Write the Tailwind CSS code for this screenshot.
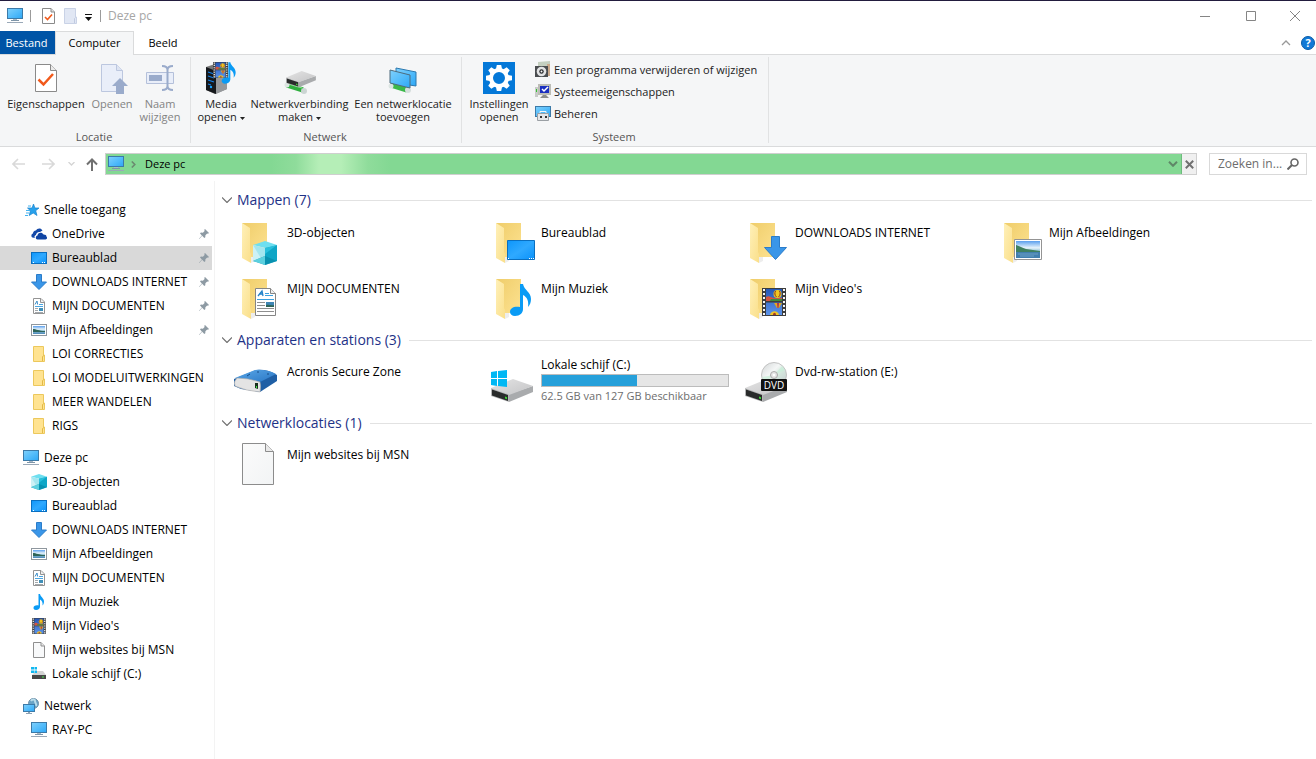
<!DOCTYPE html>
<html lang="nl">
<head>
<meta charset="utf-8">
<title>Deze pc</title>
<script src="https://cdn.jsdelivr.net/npm/@tailwindcss/browser@4"></script>
</head>
<body class="flex min-h-screen flex-col bg-white font-['Open_Sans','Noto_Sans',sans-serif] text-xs text-black">

<svg class="absolute size-0" aria-hidden="true">
  <defs>
    <linearGradient id="gScreen" x1="0" y1="0" x2="1" y2="1"><stop offset="0" stop-color="#7fd0fb"/><stop offset=".5" stop-color="#55bdfb"/><stop offset="1" stop-color="#2ea7f5"/></linearGradient>
    <linearGradient id="gDesk" x1="0" y1="0" x2="1" y2="1"><stop offset="0" stop-color="#0d96fb"/><stop offset=".5" stop-color="#2fa9ff"/><stop offset="1" stop-color="#0a92fa"/></linearGradient>
    <linearGradient id="gFlap" x1="0" y1="0" x2="1" y2="1"><stop offset="0" stop-color="#fff0b8"/><stop offset="1" stop-color="#fadf8a"/></linearGradient>
    <linearGradient id="gBack" x1="0" y1="0" x2="1" y2="1"><stop offset="0" stop-color="#efcd6a"/><stop offset="1" stop-color="#fde291"/></linearGradient>
    <linearGradient id="gDrive" x1="0" y1="0" x2="1" y2="1"><stop offset="0" stop-color="#e4e4e4"/><stop offset="1" stop-color="#c4c4c6"/></linearGradient>
    <linearGradient id="gBlue" x1="0" y1="0" x2="1" y2="1"><stop offset="0" stop-color="#5aa6e6"/><stop offset="1" stop-color="#2a78c6"/></linearGradient>
    <linearGradient id="gSky" x1="0" y1="0" x2="0" y2="1"><stop offset="0" stop-color="#5a9fee"/><stop offset=".4" stop-color="#e6f3fb"/><stop offset=".6" stop-color="#8fc0d4"/><stop offset="1" stop-color="#4a87b8"/></linearGradient>
    <linearGradient id="gFilm" x1="0" y1="0" x2="0" y2="1"><stop offset="0" stop-color="#2457b8"/><stop offset="1" stop-color="#5c93e8"/></linearGradient>
    <linearGradient id="gDisc" x1="0" y1="0" x2="1" y2="1"><stop offset="0" stop-color="#d2d6d6"/><stop offset=".4" stop-color="#f4f6f6"/><stop offset=".6" stop-color="#d4e6dd"/><stop offset="1" stop-color="#c4c8cc"/></linearGradient>
    <linearGradient id="gPage" x1="0" y1="0" x2="1" y2="1"><stop offset="0" stop-color="#fbfbfb"/><stop offset="1" stop-color="#f2f4f5"/></linearGradient>

    <symbol id="pc" viewBox="0 0 16 16"><rect x=".5" y=".5" width="15" height="10" fill="url(#gScreen)" stroke="#3c7aa8"/><path d="M6 11h4v1H6z" fill="#a9b9c6"/><path d="M4 12h8v1H4z" fill="#7e95a8"/><path d="M0 14h16v1H0z" fill="#9aa9b8"/></symbol>
    <symbol id="desktop" viewBox="0 0 16 16"><rect x=".5" y="2.500" width="15" height="11" fill="url(#gDesk)" stroke="#0a6fc0"/><path d="M2 12h1v1H2zM11 12h1v1h-1zM13 12h1v1h-1z" fill="#fff"/></symbol>
    <symbol id="down" viewBox="0 0 16 16"><path d="M5.500.5h5V8h5L8 15.500.5 8h5z" fill="#3a96e8" stroke="#2b7cc9"/></symbol>
    <symbol id="docs" viewBox="0 0 16 16"><path d="M2.500.5H10L13.500 4v11.500h-11z" fill="#fff" stroke="#949494"/><path d="M9.500 1v3.500H13" fill="#eee" stroke="#949494"/><path d="m4 6.500 2-3.500.6 3.500" fill="none" stroke="#3a8ecb"/><path d="M8 6.500h4M4 8.500h8" stroke="#4aa6e2"/><path d="M4 10.500h3M4 12.500h3M4 14.500h8" stroke="#a3a8ac"/><path d="M8 10h4v3H8z" fill="#3f8fb8"/></symbol>
    <symbol id="picture" viewBox="0 0 16 16"><rect x=".5" y="2.500" width="15" height="11" fill="#fff" stroke="#8f979e"/><path d="M2 4h12v8H2z" fill="url(#gSky)"/><path d="M2 7c3 0 6 2 12 2v1H2z" fill="#2f6559"/></symbol>
    <symbol id="folder" viewBox="0 0 16 16"><path d="M2.500.5h10V9h1v6.500h-11z" fill="#ffe391" stroke="#ecc85c"/><path d="M11.500 15V10.500l1.500-1" fill="none" stroke="#e2b945"/></symbol>
    <symbol id="cube" viewBox="0 0 24 24"><path d="M12 0 24 4 12 7 0 4z" fill="#6edff0"/><path d="m0 4 12 3v17L0 20z" fill="#cdf1f5"/><path d="m0 4 12 3v17z" fill="#a4e6ef"/><path d="m24 4-12 3v17l12-4z" fill="#0fa6c6"/><path d="m24 4-12 3v6z" fill="#27bfdc"/><path d="m12 15 12 5-12 4-12-4z" fill="#078aa8" opacity=".75"/><path d="m12 15-12 5 12 4z" fill="#5cd0df"/></symbol>
    <symbol id="note" viewBox="0 0 24 32"><path d="M11 0h3c1 6 8 8 8 15 0 3-1 6-3 8 1-6-1-10-5-12v14c0 4-3 7-8 7-3 0-5-2-5-4 0-4 4-6 10-5z" fill="#0a9bf5"/></symbol>
    <symbol id="film" viewBox="0 0 24 28"><path d="M0 0h24v28H0z" fill="#3d3d3d"/><path d="M4 1h16v12H4zM4 14.500h16V27H4z" fill="url(#gFilm)"/><path d="M4 9c3-2 4 0 8 1s5-1 8 0v3H4z" fill="#d4543e"/><path d="M9 11h11v2H8z" fill="#3d8c3a"/><circle cx="15.500" cy="6" r="4" fill="#f0c81f"/><path d="M13.500 3c-1 2-1 4 1 6M17.500 3c1 2 1 4-1 6" stroke="#8b2f22" fill="none"/><path d="M12 15h8l-3 5h-2z" fill="#e2a81f"/><path d="M15 15h2l-.5 5h-1z" fill="#a82f52"/><path d="M8 27c1-5 8-5 9 0z" fill="#f0c424"/><path d="M11 27c0-3 3-3 3 0z" fill="#a2362a"/><path d="M2 1v27M22 1v27" stroke="#f6f6f6" stroke-width="2" stroke-dasharray="2 2"/></symbol>
    <symbol id="page" viewBox="0 0 16 16"><path d="M2.500.5H10L13.500 4v11.500h-11z" fill="#f8f9fa" stroke="#8f8f8f"/><path d="M10 .5V4h3.500" fill="#e8e8e8" stroke="#8f8f8f"/></symbol>
    <symbol id="cdrive" viewBox="0 0 16 16"><path d="m5 5h7l3 4H1z" fill="#d3d3d3"/><path d="M0 1h3v2.500H0zM3.500 1H6v2.500H3.500zM0 4.500h3V7H0zM3.500 4.500H6V7H3.500z" fill="#12b8f0"/><path d="M1 9h14v4H1z" fill="#474747"/><path d="M11 10.500h2v1h-2z" fill="#4be14b"/></symbol>
    <symbol id="network" viewBox="0 0 16 16"><circle cx="10.500" cy="5.500" r="5" fill="#6aa3c6" stroke="#6f8fa6"/><path d="M8 3c1-2 4-2 4 0s2 3 1 5" stroke="#b9dcea" stroke-width="2" fill="none"/><rect x=".5" y="6.500" width="11" height="7" fill="url(#gScreen)" stroke="#3c7aa8"/><path d="M5 14h2v1h2v1H3v-1h2z" fill="#8ea2b4"/></symbol>
    <symbol id="star" viewBox="0 0 16 16"><path d="m9.500 2 1.400 4H15l-3.300 2.700L13 13.500 9.200 11 5.200 13.500l1.200-4.800L3.500 6H8z" fill="#27a1ec" stroke="#1783cf" stroke-width=".7"/><path d="M4 4h3M2 8.500h4M2 11h3M1 13.500h3" stroke="#45b2ee"/></symbol>
    <symbol id="onedrive" viewBox="0 0 16 16"><path d="M1.500 11.500C0 11 0 8 2 7.500 2 5 4.500 4.500 5 4.500 6 2 10 1.500 11.500 4.500L9 6C7 5.500 5 7 5 9c-1.500.5-2 2-1 3z" fill="#1449a8"/><path d="M6.500 13.500C4 13 4.500 10 6.500 9.500 6.500 6.500 11 5.500 12.500 8.500 15 8.500 15.500 9.500 15.300 10.500 16.500 11 16.300 13.500 14.500 13.500z" fill="#0f44a4"/></symbol>
    <symbol id="pin" viewBox="0 0 10 10"><path d="m6 0 4 4-1 .8-.8-.3L6.400 6.300 6.300 8.200 5.300 9 3.200 6.800.3 10l-.3-.3L2.900 6.500 1 4.500l.9-.9 2 .1 1.700-1.800L5.300.8z" fill="#8d9aa3"/></symbol>
    <symbol id="folderLarge" viewBox="0 0 48 48"><path d="m17 44 4-2V38h-4z" fill="#ededed"/><path d="M8 4h25v34H16z" fill="url(#gBack)"/><path d="m8 4 8 5v24l1 2v9l-9-5z" fill="url(#gFlap)"/></symbol>
    <symbol id="check" viewBox="0 0 22 28"><path d="M.5.5h15l6 6v21H.5z" fill="#fff" stroke="#8a8a8a"/><path d="M15.500.5v6h6" fill="#ebebeb" stroke="#8a8a8a"/><path d="m3.500 15.500 5 5L18 10" fill="none" stroke="#f1591b" stroke-width="2.500"/></symbol>
    <symbol id="drive" viewBox="0 0 42 24"><path d="m18 15 24-8v6L18 23z" fill="#a9abad"/><path d="M0 9 22 0l20 7-24 9z" fill="url(#gDrive)"/><path d="m0 9 18 6.500V23L0 17z" fill="#b5b6b7"/><path d="m1 10.500 16 5.500v6L1 16.500z" fill="#292b2b"/><path d="m14 17.500 2 .8v2l-2-.8z" fill="#3dd635"/></symbol>
  </defs>
</svg>

<!-- Title bar -->
<header class="flex h-[31px] shrink-0 items-center border-t border-[#221c3e]">
  <div class="flex items-center pl-[7px]">
    <svg class="size-4"><use href="#pc"/></svg>
    <span class="ml-[7px] h-3 w-px bg-[#9b9b9b]"></span>
    <button aria-label="Eigenschappen" class="ml-[11px]"><svg class="h-4 w-[13px]" viewBox="0 0 13 16"><path d="M.5.5H9L12.500 4v11.500H.5z" fill="#fff" stroke="#8a8a8a"/><path d="M9 .5V4h3.500" fill="#ddd" stroke="#8a8a8a"/><path d="m3 9 2.500 2.500L10 6.500" fill="none" stroke="#f1591b" stroke-width="1.600"/></svg></button>
    <button aria-label="Nieuwe map" disabled class="ml-[9px]"><svg class="h-4 w-[13px]" viewBox="0 0 13 16"><path d="M.5.5h11V9h1v6.500H.5z" fill="#e1e7f4" stroke="#c9d2e6"/><path d="M10.500 15v-4.500l1-1" fill="none" stroke="#c0cae0"/></svg></button>
    <button aria-label="Werkbalk aanpassen" class="ml-2"><svg class="h-4 w-[7px]" viewBox="0 0 7 16"><path d="M0 6h7v1H0zM0 9h7l-3.500 4z" fill="#111"/></svg></button>
    <span class="ml-2 h-3 w-px bg-[#9b9b9b]"></span>
    <h1 class="ml-[7px] text-[#a6a6a6]">Deze pc</h1>
  </div>
  <div class="ml-auto flex h-full text-[#858585]">
    <button aria-label="Minimaliseren" class="flex w-[46px] items-center justify-center"><svg class="size-[10px]" viewBox="0 0 10 10"><path d="M0 5.500h10" stroke="currentColor"/></svg></button>
    <button aria-label="Maximaliseren" class="flex w-[46px] items-center justify-center"><svg class="size-[10px]" viewBox="0 0 10 10"><path d="M.5.5h9v9h-9z" fill="none" stroke="currentColor"/></svg></button>
    <button aria-label="Sluiten" class="flex w-[42px] items-center justify-center"><svg class="size-[10px]" viewBox="0 0 10 10"><path d="m0 0 10 10M10 0 0 10" stroke="currentColor"/></svg></button>
  </div>
</header>

<!-- Ribbon tabs -->
<div class="flex h-6 shrink-0 items-stretch text-[11px]">
  <button class="w-[55px] border-b border-[#dadbdc] bg-[#0054a6] pt-px pr-[2px] text-white">Bestand</button>
  <button class="w-[79px] border-x border-t border-[#dadbdc] bg-[#f5f6f7]">Computer</button>
  <button class="w-[58px] border-b border-[#dadbdc] pt-px">Beeld</button>
  <div class="flex flex-1 items-center justify-end gap-[10px] border-b border-[#dadbdc] pr-px">
    <button aria-label="Lint minimaliseren"><svg class="h-[6px] w-[10px]" viewBox="0 0 10 6"><path d="m1 5 4-4 4 4" fill="none" stroke="#999" stroke-width="1.300"/></svg></button>
    <button aria-label="Help" class="size-[14px] rounded-full border border-[#0a5ca8] bg-[#1279d6] leading-3 font-bold text-white">?</button>
  </div>
</div>

<!-- Ribbon -->
<div class="flex h-[92px] shrink-0 border-b border-[#dadbdc] bg-[#f5f6f7] pt-[2px] pb-[3px] text-[11px] leading-[13px] text-[#222]">
  <section class="flex w-[191px] flex-col border-r border-[#e1e2e3]">
    <div class="flex flex-1 pl-1">
      <button class="flex w-[84px] flex-col items-center gap-[3px] pt-[5px]"><span class="flex h-8 items-center"><svg class="h-7 w-[22px]"><use href="#check"/></svg></span>Eigenschappen</button>
      <button disabled class="flex w-12 flex-col items-center gap-[3px] pt-[5px] text-[#838383]"><svg class="size-8" viewBox="0 0 32 32"><path d="M5.500 2.500h15l6 6v21h-21z" fill="#e9eef9" stroke="#bcc7df"/><path d="M20.500 2.500v6h6" fill="#dde4f2" stroke="#bcc7df"/><path d="m24 16 8 8h-4v8h-8v-8h-4z" fill="#9aabcb"/></svg>Openen</button>
      <button disabled class="flex w-12 flex-col items-center gap-[3px] pt-[5px] text-[#838383]"><svg class="size-8" viewBox="0 0 32 32"><path d="M2.500 10.500h27v11h-27z" fill="#e9eef9" stroke="#b4c0da"/><path d="M5 13h13v6H5z" fill="#9aabcb"/><path d="M18 4c4 0 5.500 1 5.500 4v16c0 3-1.500 4-5.500 4M29 4c-4 0-5.500 1-5.500 4v16c0 3 1.500 4 5.500 4" fill="none" stroke="#9aabcb" stroke-width="2"/></svg><span>Naam<br>wijzigen</span></button>
    </div>
    <h2 class="pr-[2px] text-center text-[#555]">Locatie</h2>
  </section>
  <section class="flex w-[271px] flex-col border-r border-[#e1e2e3]">
    <div class="flex flex-1 pl-1">
      <button class="flex w-[52px] flex-col items-center gap-[3px] pt-[5px]">
        <svg class="size-8" viewBox="0 0 32 32"><path d="m1 5 12-4 9 3v23l-12 5-9-4z" fill="#777"/><path d="m1 5 10 4v23L1 28z" fill="#15181c"/><path d="m11 9 11-4v22l-11 5z" fill="#96999c"/><path d="m3 10 6 2M3 14l6 2M3 18l6 2M3 22l3 1" stroke="#1582ea" stroke-width="1.300"/><circle cx="6" cy="25" r="1.200" fill="#16a1ff"/><svg x="8" y="0" width="15" height="16" viewBox="0 0 24 28" preserveAspectRatio="none"><use href="#film" width="24" height="28"/></svg><use href="#note" x="16" y="0" width="16" height="22"/></svg>
        <span>Media<br>openen <svg class="inline h-[3px] w-[5px] align-middle" viewBox="0 0 5 3"><path d="M0 0h5L2.500 3z" fill="#222"/></svg></span></button>
      <button class="flex w-[105px] flex-col items-center gap-[3px] pt-[5px]">
        <svg class="size-8" viewBox="0 0 32 32"><path d="m3 23 16 5" stroke="#2fae3e" stroke-width="5"/><path d="m4 22 14 4" stroke="#8be58f"/><circle cx="3" cy="23" r="2.500" fill="#dce5e2"/><circle cx="20" cy="29" r="3" fill="#cbd5d3"/><use href="#drive" x="2" y="9" width="30" height="17"/></svg>
        <span>Netwerkverbinding<br>maken <svg class="inline h-[3px] w-[5px] align-middle" viewBox="0 0 5 3"><path d="M0 0h5L2.500 3z" fill="#222"/></svg></span></button>
      <button class="flex w-[102px] flex-col items-center gap-[3px] pt-[5px]">
        <svg class="size-8" viewBox="0 0 32 32"><path d="m9 6 20 4v14L9 21z" fill="url(#gScreen)" stroke="#2c78ae"/><path d="m4 23 16 5" stroke="#3bb84a" stroke-width="5"/><circle cx="4" cy="24" r="2.500" fill="#dce5e2"/><circle cx="21" cy="28" r="3" fill="#d5dedc"/><path d="m3 8 20 5v13L3 21z" fill="url(#gScreen)" stroke="#4d6b7d"/></svg>
        <span>Een netwerklocatie<br>toevoegen</span></button>
    </div>
    <h2 class="pr-[2px] text-center text-[#555]">Netwerk</h2>
  </section>
  <section class="flex w-[307px] flex-col border-r border-[#e1e2e3]">
    <div class="flex flex-1 pl-1">
      <button class="flex w-[66px] flex-col items-center gap-[3px] pt-[5px]">
        <svg class="size-8" viewBox="0 0 32 32"><path d="M0 0h32v32H0z" fill="#0478d8"/><g transform="translate(16 16)" fill="#fff"><path id="tooth" d="M-2.200-13h4.400l1 5h-6.400z"/><use href="#tooth" transform="rotate(45)"/><use href="#tooth" transform="rotate(90)"/><use href="#tooth" transform="rotate(135)"/><use href="#tooth" transform="rotate(180)"/><use href="#tooth" transform="rotate(225)"/><use href="#tooth" transform="rotate(270)"/><use href="#tooth" transform="rotate(315)"/><circle r="8" fill="none" stroke="#fff" stroke-width="4"/></g></svg>
        <span>Instellingen<br>openen</span></button>
      <div class="flex flex-col pt-px pl-[3px]">
        <button class="flex h-[22px] items-center gap-[3px]"><svg class="size-4" viewBox="0 0 16 16"><path d="m3 1 12-1v10H3z" fill="#c4cfc0"/><path d="M12 3h3v12h-3z" fill="#c9a98c"/><path d="M0 5h13v11H0z" fill="#4a4d50"/><circle cx="6.500" cy="10.500" r="4.800" fill="#e2e3e4"/><circle cx="6.500" cy="10.500" r="2.200" fill="#26282a"/><circle cx="6.500" cy="10.500" r="1" fill="#fff"/></svg>Een programma verwijderen of wijzigen</button>
        <button class="flex h-[22px] items-center gap-[3px]"><svg class="size-4" viewBox="0 0 16 16"><path d="M0 4h3v10H0z" fill="#c8cbc8"/><path d="M1 6h1v3H1z" fill="#32c32e"/><path d="M3 1h13v11H3z" fill="#bcbdb6"/><path d="M5 3h9v7H5z" fill="#1a2fc0"/><path d="m7 6 2 2 4-4" fill="none" stroke="#fff" stroke-width="1.500"/><path d="M8 12h3l3 3H5z" fill="#8c8e8b"/></svg>Systeemeigenschappen</button>
        <button class="flex h-[22px] items-center gap-[3px]"><svg class="size-4" viewBox="0 0 16 16"><rect x=".5" y="1.500" width="15" height="10" fill="url(#gScreen)" stroke="#3c7aa8"/><path d="M2.500 8.500h11v7h-11z" fill="#e4e6e8" stroke="#9a9fa4"/><path d="M5 8V6.500h6V8" fill="none" stroke="#f5f5f5"/><path d="M5 11h2v2H5zM10 11h2v2h-2z" fill="#333"/></svg>Beheren</button>
      </div>
    </div>
    <h2 class="pr-[2px] text-center text-[#555]">Systeem</h2>
  </section>
</div>

<!-- Address bar -->
<div class="flex h-[34px] shrink-0 items-center pr-[9px]">
  <div class="flex w-[105px] shrink-0 items-center pl-3">
    <button aria-label="Vorige" disabled><svg class="h-3 w-[13px]" viewBox="0 0 13 12"><path d="M13 6H1.500M6 1 1 6l5 5" fill="none" stroke="#d9d9d9" stroke-width="1.600"/></svg></button>
    <button aria-label="Volgende" disabled class="ml-[17px]"><svg class="h-3 w-[13px]" viewBox="0 0 13 12"><path d="M0 6h11.500M7 1l5 5-5 5" fill="none" stroke="#d9d9d9" stroke-width="1.600"/></svg></button>
    <button aria-label="Recente locaties" class="ml-[13px]"><svg class="h-1 w-[7px]" viewBox="0 0 7 4"><path d="m.5 0 3 3 3-3" fill="none" stroke="#d4d4d4" stroke-width="1.300"/></svg></button>
    <button aria-label="Omhoog" class="ml-[11px]"><svg class="h-[13px] w-3" viewBox="0 0 12 13"><path d="M6 13V2M1 6.500l5-5 5 5" fill="none" stroke="#707070" stroke-width="2"/></svg></button>
  </div>
  <div class="flex h-[22px] flex-1 items-stretch border border-[#cfcfcf] bg-[#83d893]">
    <div class="flex flex-1 items-center bg-[linear-gradient(90deg,#83d893_165px,#8fdc9b_190px,#b5eeb7_213px,#b5eeb7_235px,#8fdc9b_262px,#83d893_285px)] pl-[2px]">
      <svg class="size-4 shrink-0"><use href="#pc"/></svg>
      <svg class="ml-[7px] h-[7px] w-[5px]" viewBox="0 0 5 7"><path d="m.8.5 3 3-3 3" fill="none" stroke="#6b8a70" stroke-width="1.600"/></svg>
      <button class="ml-[9px] text-[11px]">Deze pc</button>
      <button aria-label="Vorige locaties" class="mr-[3px] ml-auto"><svg class="h-[6px] w-[10px]" viewBox="0 0 10 6"><path d="m1 .8 4 4 4-4" fill="none" stroke="#5f8767" stroke-width="2"/></svg></button>
    </div>
    <button aria-label="Stoppen" class="flex w-[15px] items-center justify-center border-l border-[#6ebc7d] bg-[#f0f0f0]"><svg class="size-[9px]" viewBox="0 0 9 9"><path d="m.8.8 7.400 7.400M8.200.8.8 8.200" stroke="#707070" stroke-width="2"/></svg></button>
  </div>
  <label class="ml-3 flex h-[22px] w-[98px] items-center border border-[#d9d9d9] pr-[7px] pl-2">
    <input type="text" aria-label="Zoeken in Deze pc" placeholder="Zoeken in..." class="w-0 flex-1 outline-none placeholder:text-[#6d6d6d]">
    <svg class="size-3 shrink-0" viewBox="0 0 12 12"><circle cx="7.500" cy="4.500" r="3.500" fill="none" stroke="#666" stroke-width="1.600"/><path d="m5 7-4.500 4.500" stroke="#666" stroke-width="2"/></svg>
  </label>
</div>

<div class="flex flex-1">
  <!-- Navigation pane -->
  <nav class="w-[215px] shrink-0 border-r border-[#f3f3f3] pt-[17px]">
    <ul class="leading-6">
      <li><a href="#" class="flex h-6 items-center gap-1 pl-6"><svg class="size-4"><use href="#star"/></svg>Snelle toegang</a></li>
      <li><a href="#" class="mr-[2px] flex h-6 items-center gap-[5px] pr-[3px] pl-[31px]"><svg class="size-4"><use href="#onedrive"/></svg>OneDrive<svg class="ml-auto size-[10px]"><use href="#pin"/></svg></a></li>
      <li><a href="#" aria-current="true" class="mr-[2px] flex h-6 items-center gap-[5px] bg-[#d9d9d9] pr-[3px] pl-[31px]"><svg class="size-4"><use href="#desktop"/></svg>Bureaublad<svg class="ml-auto size-[10px]"><use href="#pin"/></svg></a></li>
      <li><a href="#" class="mr-[2px] flex h-6 items-center gap-[5px] pr-[3px] pl-[31px]"><svg class="size-4"><use href="#down"/></svg>DOWNLOADS INTERNET<svg class="ml-auto size-[10px]"><use href="#pin"/></svg></a></li>
      <li><a href="#" class="mr-[2px] flex h-6 items-center gap-[5px] pr-[3px] pl-[31px]"><svg class="size-4"><use href="#docs"/></svg>MIJN DOCUMENTEN<svg class="ml-auto size-[10px]"><use href="#pin"/></svg></a></li>
      <li><a href="#" class="mr-[2px] flex h-6 items-center gap-[5px] pr-[3px] pl-[31px]"><svg class="size-4"><use href="#picture"/></svg>Mijn Afbeeldingen<svg class="ml-auto size-[10px]"><use href="#pin"/></svg></a></li>
      <li><a href="#" class="flex h-6 items-center gap-[5px] pl-[31px]"><svg class="size-4"><use href="#folder"/></svg>LOI CORRECTIES</a></li>
      <li><a href="#" class="flex h-6 items-center gap-[5px] pl-[31px]"><svg class="size-4"><use href="#folder"/></svg>LOI MODELUITWERKINGEN</a></li>
      <li><a href="#" class="flex h-6 items-center gap-[5px] pl-[31px]"><svg class="size-4"><use href="#folder"/></svg>MEER WANDELEN</a></li>
      <li><a href="#" class="flex h-6 items-center gap-[5px] pl-[31px]"><svg class="size-4"><use href="#folder"/></svg>RIGS</a></li>
    </ul>
    <ul class="mt-2 leading-6">
      <li><a href="#" class="flex h-6 items-center gap-[5px] pl-[23px]"><svg class="size-4"><use href="#pc"/></svg>Deze pc</a></li>
      <li><a href="#" class="flex h-6 items-center gap-[5px] pl-[31px]"><svg class="size-4"><use href="#cube"/></svg>3D-objecten</a></li>
      <li><a href="#" class="flex h-6 items-center gap-[5px] pl-[31px]"><svg class="size-4"><use href="#desktop"/></svg>Bureaublad</a></li>
      <li><a href="#" class="flex h-6 items-center gap-[5px] pl-[31px]"><svg class="size-4"><use href="#down"/></svg>DOWNLOADS INTERNET</a></li>
      <li><a href="#" class="flex h-6 items-center gap-[5px] pl-[31px]"><svg class="size-4"><use href="#picture"/></svg>Mijn Afbeeldingen</a></li>
      <li><a href="#" class="flex h-6 items-center gap-[5px] pl-[31px]"><svg class="size-4"><use href="#docs"/></svg>MIJN DOCUMENTEN</a></li>
      <li><a href="#" class="flex h-6 items-center gap-[5px] pl-[31px]"><svg class="size-4"><use href="#note"/></svg>Mijn Muziek</a></li>
      <li><a href="#" class="flex h-6 items-center gap-[5px] pl-[31px]"><svg class="size-4"><use href="#film"/></svg>Mijn Video's</a></li>
      <li><a href="#" class="flex h-6 items-center gap-[5px] pl-[31px]"><svg class="size-4"><use href="#page"/></svg>Mijn websites bij MSN</a></li>
      <li><a href="#" class="flex h-6 items-center gap-[5px] pl-[31px]"><svg class="size-4"><use href="#cdrive"/></svg>Lokale schijf (C:)</a></li>
    </ul>
    <ul class="mt-2 leading-6">
      <li><a href="#" class="flex h-6 items-center gap-[5px] pl-[23px]"><svg class="size-4"><use href="#network"/></svg>Netwerk</a></li>
      <li><a href="#" class="flex h-6 items-center gap-[5px] pl-[31px]"><svg class="size-4"><use href="#pc"/></svg>RAY-PC</a></li>
    </ul>
  </nav>

  <!-- Contents -->
  <main class="flex-1 pt-2 pr-1 pl-[7px]">
    <section>
      <h2 class="flex h-[22px] items-center text-sm text-[#1e3287]"><button aria-label="Mappen inklappen" class="mr-[5px]"><svg class="h-[6px] w-[10px]" viewBox="0 0 10 6"><path d="m0 .5 5 5 5-5" fill="none" stroke="#707070" stroke-width="1.200"/></svg></button>Mappen (7)<span class="ml-2 h-px flex-1 bg-[#e2e2e2]"></span></h2>
      <ul class="grid grid-cols-[repeat(auto-fill,254px)] pt-[6px] pl-3">
        <li><a href="#" class="flex h-14 gap-[5px] pt-[2px]"><svg class="size-12" viewBox="0 0 48 48"><use href="#folderLarge"/><use href="#cube" x="19" y="22" width="24" height="24"/></svg><span class="pt-[5px] leading-[18px]">3D-objecten</span></a></li>
        <li><a href="#" class="flex h-14 gap-[5px] pt-[2px]"><svg class="size-12" viewBox="0 0 48 48"><use href="#folderLarge"/><path d="M19.500 21.500h27v19h-27z" fill="url(#gDesk)" stroke="#0a6fc0"/><path d="M20 39h1v1h-1zM41 39h1v1h-1zM43 39h1v1h-1zM45 39h1v1h-1z" fill="#fff"/></svg><span class="pt-[5px] leading-[18px]">Bureaublad</span></a></li>
        <li><a href="#" class="flex h-14 gap-[5px] pt-[2px]"><svg class="size-12" viewBox="0 0 48 48"><use href="#folderLarge"/><path d="M29.500 17.500h8v11h7L33.500 40.500l-11-12h7z" fill="#3a96e8" stroke="#2b7cc9"/></svg><span class="pt-[5px] leading-[18px]">DOWNLOADS INTERNET</span></a></li>
        <li><a href="#" class="flex h-14 gap-[5px] pt-[2px]"><svg class="size-12" viewBox="0 0 48 48"><use href="#folderLarge"/><path d="M18.500 20.500h27v20h-27z" fill="#fff" stroke="#949494"/><path d="M20 22h24v17H20z" fill="url(#gSky)"/><path d="M20 26c4 1 6 3 10 4 5 1 9 1 14 2v2H20z" fill="#3f8060"/><path d="M20 33h24v6H20z" fill="#427fae"/><path d="M22 35h20M24 37h14" stroke="#86b5d4" stroke-width=".6"/></svg><span class="pt-[5px] leading-[18px]">Mijn Afbeeldingen</span></a></li>
        <li><a href="#" class="flex h-14 gap-[5px] pt-[2px]"><svg class="size-12" viewBox="0 0 48 48"><use href="#folderLarge"/><path d="M21.500 13.500h15l5 5v22h-20z" fill="#fff" stroke="#858585"/><path d="M36.500 13.500v5h5" fill="#eee" stroke="#858585"/><path d="m24 21 4-5 1 5m-4-2h4" fill="none" stroke="#2382c8" stroke-width="1.300"/><path d="M31 18.500h4M31 20.500h8M23 24.500h17" stroke="#3aa0e0"/><path d="M23 27.500h8M23 30.500h8M23 33.500h17M23 36.500h17" stroke="#8f8f8f"/><path d="M32 27h8v5h-8z" fill="#3f86b5"/><path d="M32 30c3-1 5 1 8 0v2h-8z" fill="#2f6559"/></svg><span class="pt-[5px] leading-[18px]">MIJN DOCUMENTEN</span></a></li>
        <li><a href="#" class="flex h-14 gap-[5px] pt-[2px]"><svg class="size-12" viewBox="0 0 48 48"><use href="#folderLarge"/><use href="#note" x="21" y="9" width="24" height="32"/></svg><span class="pt-[5px] leading-[18px]">Mijn Muziek</span></a></li>
        <li><a href="#" class="flex h-14 gap-[5px] pt-[2px]"><svg class="size-12" viewBox="0 0 48 48"><use href="#folderLarge"/><use href="#film" x="20" y="13" width="24" height="28"/></svg><span class="pt-[5px] leading-[18px]">Mijn Video's</span></a></li>
      </ul>
    </section>
    <section>
      <h2 class="flex h-[22px] items-center text-sm text-[#1e3287]"><button aria-label="Apparaten en stations inklappen" class="mr-[5px]"><svg class="h-[6px] w-[10px]" viewBox="0 0 10 6"><path d="m0 .5 5 5 5-5" fill="none" stroke="#707070" stroke-width="1.200"/></svg></button>Apparaten en stations (3)<span class="ml-2 h-px flex-1 bg-[#e2e2e2]"></span></h2>
      <ul class="grid grid-cols-[repeat(auto-fill,254px)] pt-[5px] pl-3">
        <li><a href="#" class="flex h-14 gap-[5px] pt-[2px]"><svg class="size-12" viewBox="0 0 48 48"><path d="m0 21 22-9q12-1 21 5v6L26 34 7 31 0 28z" fill="#1f5fa5"/><path d="M1 20 21 12q11-1 21 4L26 24z" fill="url(#gBlue)"/><path d="M3 20q12 0 23 4 1 5 0 10Q12 33 1 28q-2-4 2-8z" fill="#e4e4e4" stroke="#aaa" stroke-width=".6"/><path d="M21 25h3v6l-3-1z" fill="#18301c"/><path d="M22 28h1v2h-1z" fill="#43e34a"/><path d="m13 18 3-2M23 14h2M33 16h2" stroke="#174d87"/></svg><span class="pt-[5px] leading-[18px]">Acronis Secure Zone</span></a></li>
        <li><a href="#" class="flex h-14 gap-[5px]"><svg class="mt-[2px] size-12" viewBox="0 0 48 48"><use href="#drive" x="3" y="21" width="42" height="24"/><path d="m3 14 6-1v7H3zM10 13l9-1v8h-9zM3 21h6v7l-6-1zM10 21h9v8l-9-1z" fill="#00b8f4"/></svg><div class="w-[188px]"><div class="leading-[18px]">Lokale schijf (C:)</div><div role="progressbar" aria-label="Gebruikte ruimte" aria-valuenow="51" class="h-[13px] border border-[#bcbcbc] bg-[#e6e6e6]"><div class="h-full bg-[#26a0da]" style="width:51%"></div></div><div class="text-[11px] leading-[18px] text-[#6d6d6d]">62.5 GB van 127 GB beschikbaar</div></div></a></li>
        <li><a href="#" class="flex h-14 gap-[5px] pt-[2px]"><svg class="size-12" viewBox="0 0 48 48"><use href="#drive" x="3" y="21" width="42" height="24"/><circle cx="32" cy="17" r="12.500" fill="url(#gDisc)" stroke="#c2c2c2"/><path d="m32 17 8-9 3 4zM32 17l-9 7-3-5z" fill="#c6eed7" opacity=".7"/><circle cx="32" cy="17" r="3.500" fill="#e4e4e4" stroke="#aaa"/><circle cx="32" cy="17" r="1.300" fill="#fff"/><rect x="19" y="21" width="26" height="12" rx="1" fill="#111"/><text x="32" y="31" fill="#fff" font-size="10" text-anchor="middle" font-family="Open Sans, sans-serif">DVD</text></svg><span class="pt-[5px] leading-[18px]">Dvd-rw-station (E:)</span></a></li>
      </ul>
    </section>
    <section>
      <h2 class="flex h-[22px] items-center text-sm text-[#1e3287]"><button aria-label="Netwerklocaties inklappen" class="mr-[5px]"><svg class="h-[6px] w-[10px]" viewBox="0 0 10 6"><path d="m0 .5 5 5 5-5" fill="none" stroke="#707070" stroke-width="1.200"/></svg></button>Netwerklocaties (1)<span class="ml-2 h-px flex-1 bg-[#e2e2e2]"></span></h2>
      <ul class="grid grid-cols-[repeat(auto-fill,254px)] pt-[5px] pl-3">
        <li><a href="#" class="flex h-14 gap-[5px] pt-[2px]"><svg class="size-12" viewBox="0 0 48 48"><path d="M8.500 2.500h23l8 8v33h-31z" fill="url(#gPage)" stroke="#8c8c8c"/><path d="M31.500 2.500v8h8" fill="#e9e9e9" stroke="#8c8c8c"/></svg><span class="pt-[5px] leading-[18px]">Mijn websites bij MSN</span></a></li>
      </ul>
    </section>
  </main>
</div>
</body>
</html>
